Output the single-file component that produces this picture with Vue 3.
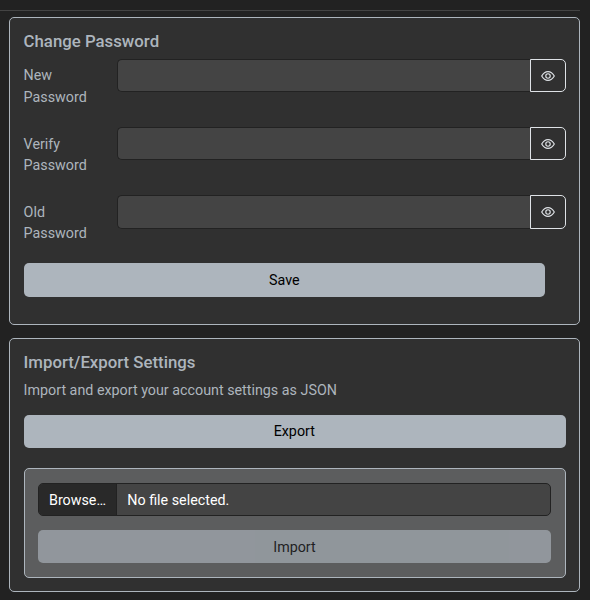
<script setup>
const fields = [
  { id: 'new-password', label: 'New Password' },
  { id: 'verify-password', label: 'Verify Password' },
  { id: 'old-password', label: 'Old Password' },
]
</script>

<template>
  <main class="page">
    <hr class="divider" />
    <section class="card password-card">
      <h2>Change Password</h2>
      <div v-for="field in fields" :key="field.id" class="row">
        <label :for="field.id">{{ field.label }}</label>
        <div class="group">
          <input :id="field.id" type="password" />
          <button type="button" class="toggle">
            <svg viewBox="0 0 24 24" fill="none" stroke="currentColor" stroke-width="2">
              <path d="M1.2 12C4 7 7.6 4.4 12 4.4S20 7 22.8 12C20 17 16.4 19.6 12 19.6S4 17 1.2 12Z" />
              <circle cx="12" cy="12" r="3.8" />
            </svg>
          </button>
        </div>
      </div>
      <button type="button" class="btn save">Save</button>
    </section>
    <section class="card settings-card">
      <h2>Import/Export Settings</h2>
      <p>Import and export your account settings as JSON</p>
      <button type="button" class="btn">Export</button>
      <div class="import-box">
        <div class="file">
          <span class="browse">Browse…</span>
          <span class="name">No file selected.</span>
        </div>
        <button type="button" class="btn" disabled>Import</button>
      </div>
    </section>
  </main>
</template>

<style>
body {
  margin: 0;
  background: #222;
}
</style>

<style scoped>
* {
  box-sizing: border-box;
}
.page {
  height: 600px;
  padding: 10px 10px 0 9px;
  overflow: hidden;
  background: #222;
  color: #adb5bd;
  font-family: Roboto, sans-serif;
  font-size: 14.3px;
  line-height: 21.5px;
}
.divider {
  height: 1px;
  margin: 0 0 6px -9px;
  border: 0;
  background: #444;
}
.card {
  border: 1px solid #adb5bd;
  border-radius: 5px;
  background: #303030;
  padding: 14px 13px 0 13.6px;
}
.password-card {
  height: 308px;
}
.settings-card {
  height: 254px;
  margin-top: 13px;
}
h2 {
  margin: 0 0 9px;
  font-size: 16.8px;
  font-weight: 500;
  line-height: 18px;
}
.row {
  display: flex;
  height: 54px;
  margin-bottom: 14.1px;
}
.password-card h2 {
  margin-bottom: 8.8px;
}
label {
  width: 93.4px;
  padding: 6.7px 22px 0 0;
}
.group {
  display: flex;
  flex: 1;
  height: 33.55px;
}
input {
  flex: 1;
  min-width: 0;
  border: 1px solid #222;
  border-right: 0;
  border-radius: 5px 0 0 5px;
  background: #444;
  color: #fff;
  outline: 0;
}
.toggle {
  display: flex;
  align-items: center;
  justify-content: center;
  width: 36px;
  padding: 1px 1px 0 0;
  border: 1px solid #dee2e6;
  border-radius: 0 5px 5px 0;
  background: #303030;
  color: #dee2e6;
}
.toggle svg {
  width: 14px;
  height: 14px;
}
.btn {
  display: block;
  width: 100%;
  height: 33px;
  padding: 1px 1px 0 0;
  border: 0;
  border-radius: 5px;
  background: #adb5bd;
  color: #000;
  font: inherit;
}
.btn:disabled {
  padding: 2px 0 0;
  opacity: 0.65;
}
.save {
  width: 521.4px;
  height: 34px;
  padding-right: 0;
}
p {
  margin: 0 0 13.5px;
}
.import-box {
  height: 110px;
  margin-top: 20px;
  padding: 14px 14px 0 13.4px;
  border: 1px solid #adb5bd;
  border-radius: 5px;
  background: #5c5d5e;
}
.file {
  display: flex;
  height: 33px;
  margin-bottom: 14px;
  overflow: hidden;
  border: 1px solid #222;
  border-radius: 5px;
  background: #444;
  color: #fff;
  line-height: 32px;
}
.browse {
  width: 78px;
  padding-left: 10px;
  border-right: 1px solid #222;
  background: #292929;
}
.name {
  padding-left: 10.3px;
}
</style>
